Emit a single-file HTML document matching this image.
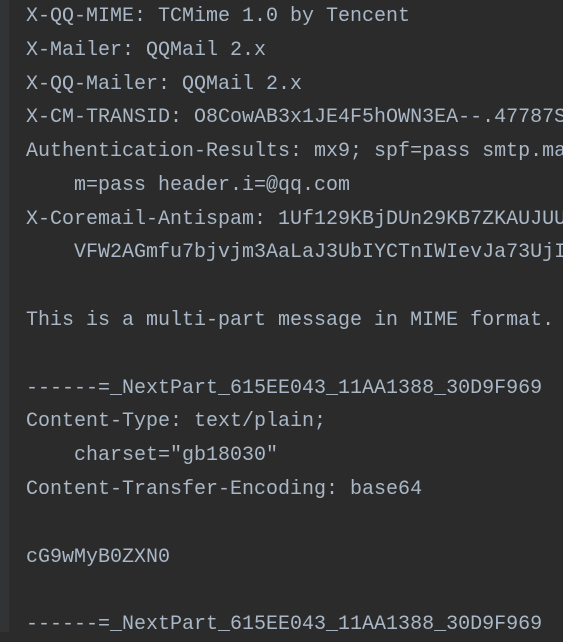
<!DOCTYPE html>
<html><head><meta charset="utf-8"><style>
html,body{margin:0;padding:0;background:#2b2b2b;width:563px;height:632px;overflow:hidden}
.bar{position:absolute;left:0;top:0;width:9px;height:632px;background:#313335}
pre{position:absolute;left:26px;top:0px;margin:0;font-family:"Liberation Mono",monospace;font-size:20px;line-height:33.78px;color:#a9b7c6;white-space:pre}
</style></head><body><div class="bar"></div><pre>X-QQ-MIME: TCMime 1.0 by Tencent
X-Mailer: QQMail 2.x
X-QQ-Mailer: QQMail 2.x
X-CM-TRANSID: O8CowAB3x1JE4F5hOWN3EA--.47787S
Authentication-Results: mx9; spf=pass smtp.ma
    m=pass header.i=@qq.com
X-Coremail-Antispam: 1Uf129KBjDUn29KB7ZKAUJUU
    VFW2AGmfu7bjvjm3AaLaJ3UbIYCTnIWIevJa73UjI

This is a multi-part message in MIME format.

------=_NextPart_615EE043_11AA1388_30D9F969
Content-Type: text/plain;
    charset="gb18030"
Content-Transfer-Encoding: base64

cG9wMyB0ZXN0

------=_NextPart_615EE043_11AA1388_30D9F969</pre></body></html>
